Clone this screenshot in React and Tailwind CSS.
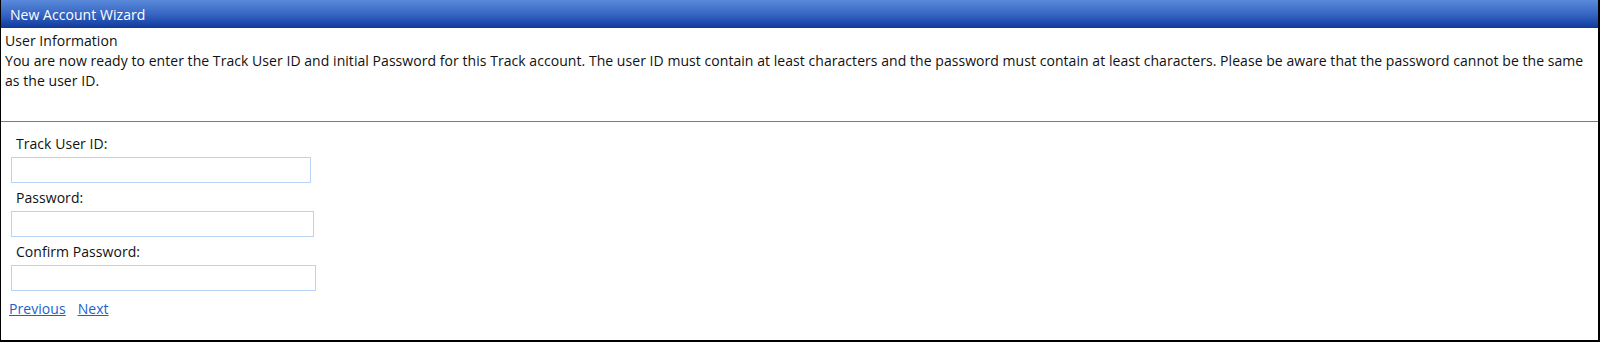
export default function App() {
  const font = { fontFamily: '"Open Sans", "Noto Sans", sans-serif' };
  return (
    <div className="w-[1601px] h-[343px] bg-white" style={font}>
      <div className="w-[1600px] h-[342px] flex flex-col border-l border-r-2 border-b-2 border-black text-[14px] text-[#111] tracking-[0.05px]">
        <div className="h-[28px] shrink-0 bg-gradient-to-b from-[#5a8ad8] via-[#3766c4] to-[#0f3a9c] text-white pl-[9px] flex items-center text-[14px]">
          New Account Wizard
        </div>
        <div className="h-[94px] shrink-0 px-[4px] pt-[3px] leading-[20px] border-b border-[#7a7a7a]">
          <div>User Information</div>
          <div>
            You are now ready to enter the Track User ID and initial Password for this Track account. The user ID must contain at least characters and the password must contain at least characters. Please be aware that the password cannot be the same as the user ID.
          </div>
        </div>
        <div className="flex flex-col pl-[10px] pt-[12px]">
          <label className="pl-[5px] leading-[20px]">Track User ID:</label>
          <input className="mt-[3px] w-[300px] h-[26px] border border-[#b9d3f7] outline-none" />
          <label className="pl-[5px] leading-[20px] mt-[5px]">Password:</label>
          <input type="password" className="mt-[3px] w-[303px] h-[26px] border border-[#b9d3f7] outline-none" />
          <label className="pl-[5px] leading-[20px] mt-[5px]">Confirm Password:</label>
          <input type="password" className="mt-[3px] w-[305px] h-[26px] border border-[#b9d3f7] outline-none" />
          <div className="flex gap-[12px] mt-[8px] -ml-[2px] leading-[20px]">
            <a href="#" className="text-[#1e5fd0] underline">Previous</a>
            <a href="#" className="text-[#1e5fd0] underline">Next</a>
          </div>
        </div>
      </div>
    </div>
  );
}
